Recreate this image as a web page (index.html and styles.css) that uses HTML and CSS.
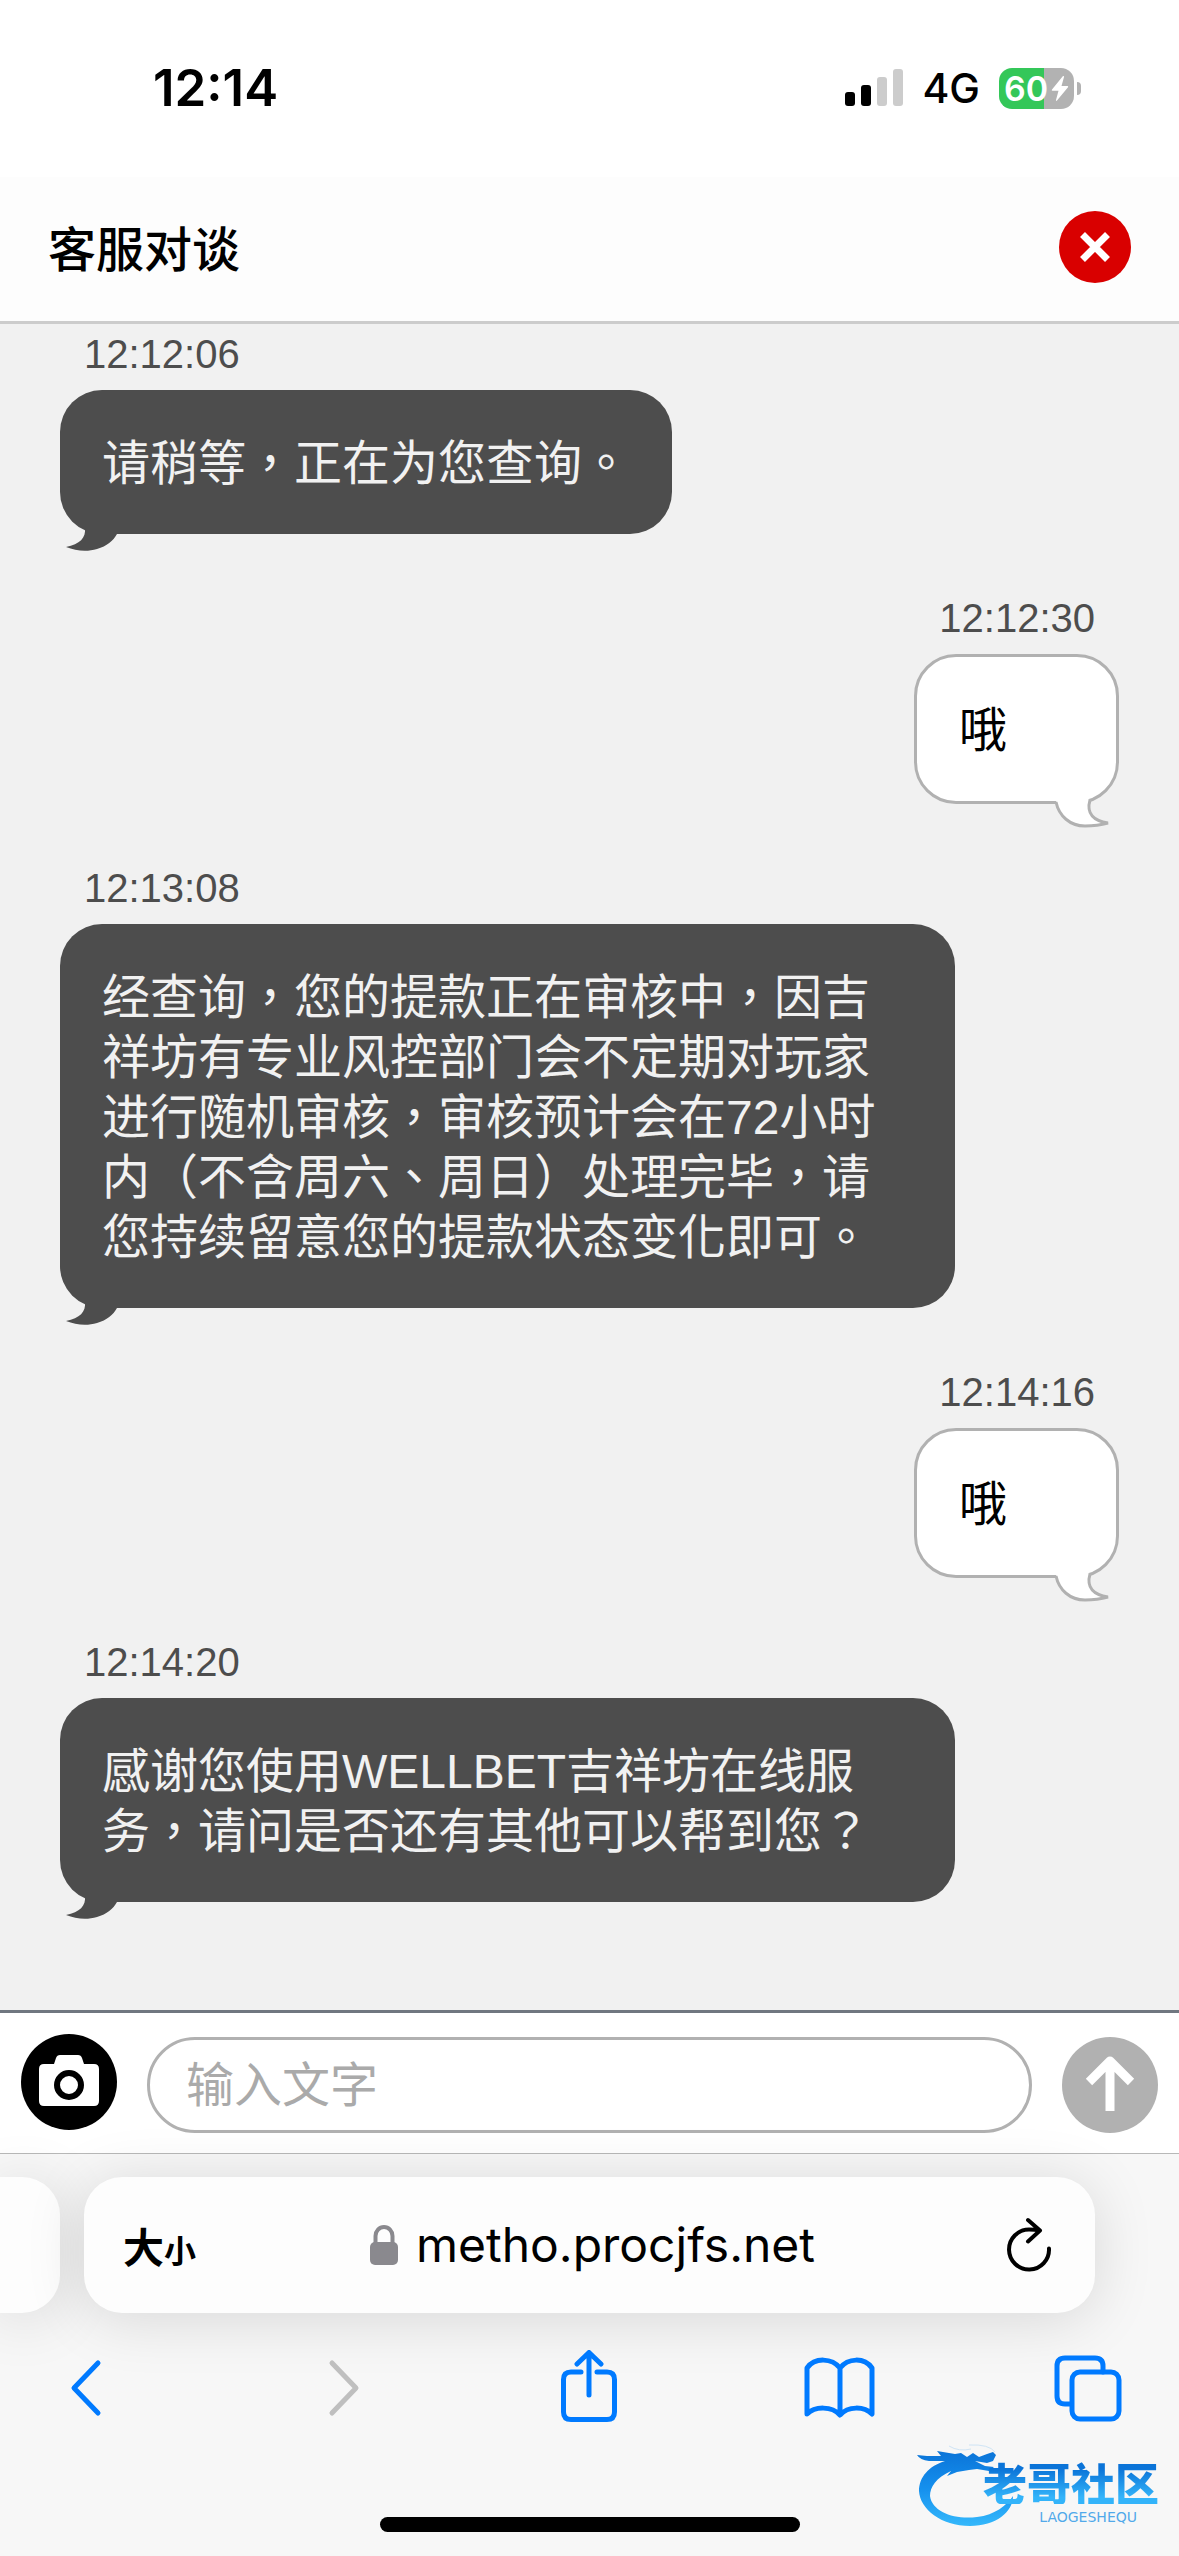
FILE: index.html
```html
<!DOCTYPE html>
<html lang="zh-Hans">
<head>
<meta charset="utf-8">
<meta name="viewport" content="width=device-width, initial-scale=1">
<title>客服对谈</title>
<link rel="stylesheet" href="styles.css">
</head>
<body>
<div class="status-bar">
  <span class="clock">12:14</span>
  <div class="indicators">
    <svg class="signal" width="58" height="38" viewBox="0 0 58 38" aria-hidden="true">
      <rect x="0" y="23" width="10" height="14" rx="3"/>
      <rect x="16" y="16" width="10" height="21" rx="3"/>
      <rect class="off" x="32" y="8" width="10" height="29" rx="3"/>
      <rect class="off" x="48" y="0" width="10" height="37" rx="3"/>
    </svg>
    <span class="network">4G</span>
    <div class="battery">
      <div class="battery-body">
        <span>60</span>
        <svg width="18" height="27" viewBox="0 0 18 27" aria-hidden="true"><path d="M12 1 1 14.5q-.8 1.200.6 1.200H7.500L5 25q-.2 1.400 1 .6L17 12.200q.6-1.200-.6-1.200H10.500L13 2q.2-1.400-1-1z"/></svg>
      </div>
      <div class="battery-cap"></div>
    </div>
  </div>
</div>

<header class="chat-header">
  <h1>客服对谈</h1>
  <button class="close" type="button" aria-label="关闭">
    <svg width="72" height="72" viewBox="0 0 72 72" aria-hidden="true"><path d="M23.500 23.500l25 25M48.500 23.500l-25 25"/></svg>
  </button>
</header>

<main class="chat" lang="zh-Hant">
  <ol class="messages">
    <li class="message agent">
      <time>12:12:06</time>
      <p class="bubble">请稍等，正在为您查询。<svg class="tail" width="52" height="24" viewBox="0 0 52 24" aria-hidden="true"><path d="M19 0C20 10 14 16 0 19C10 23 21 24 31 21C41 18 47 13 51 6V0Z"/></svg></p>
    </li>
    <li class="message visitor">
      <time>12:12:30</time>
      <p class="bubble">哦<svg class="tail" width="64" height="42" viewBox="0 0 64 42" aria-hidden="true"><path class="cover" d="M6 9H38L41 11V18H7Z"/><path class="outline" d="M6 12C9 26 20 36 35 36C44 36 51 35 58 33C44 31 36 24 40 10"/></svg></p>
    </li>
    <li class="message agent">
      <time>12:13:08</time>
      <p class="bubble">经查询，您的提款正在审核中，因吉祥坊有专业风控部门会不定期对玩家进行随机审核，审核预计会在72小时内（不含周六、周日）处理完毕，请您持续留意您的提款状态变化即可。<svg class="tail" width="52" height="24" viewBox="0 0 52 24" aria-hidden="true"><path d="M19 0C20 10 14 16 0 19C10 23 21 24 31 21C41 18 47 13 51 6V0Z"/></svg></p>
    </li>
    <li class="message visitor">
      <time>12:14:16</time>
      <p class="bubble">哦<svg class="tail" width="64" height="42" viewBox="0 0 64 42" aria-hidden="true"><path class="cover" d="M6 9H38L41 11V18H7Z"/><path class="outline" d="M6 12C9 26 20 36 35 36C44 36 51 35 58 33C44 31 36 24 40 10"/></svg></p>
    </li>
    <li class="message agent">
      <time>12:14:20</time>
      <p class="bubble">感谢您使用WELLBET吉祥坊在线服务，请问是否还有其他可以帮到您？<svg class="tail" width="52" height="24" viewBox="0 0 52 24" aria-hidden="true"><path d="M19 0C20 10 14 16 0 19C10 23 21 24 31 21C41 18 47 13 51 6V0Z"/></svg></p>
    </li>
  </ol>
</main>

<form class="composer">
  <button class="round camera" type="button" aria-label="发送图片">
    <svg width="96" height="96" viewBox="0 0 96 96" aria-hidden="true">
      <path fill="#fff" d="M23 30H33L35 24Q36 21 39 21H57Q60 21 61 24L63 30H73Q78 30 78 35V67Q78 72 73 72H23Q18 72 18 67V35Q18 30 23 30Z"/>
      <circle cx="48" cy="51" r="12" fill="#fff" stroke="#000" stroke-width="6"/>
    </svg>
  </button>
  <input class="entry" type="text" placeholder="输入文字" aria-label="输入文字">
  <button class="round send" type="button" aria-label="发送">
    <svg width="96" height="96" viewBox="0 0 96 96" aria-hidden="true"><path fill="none" stroke="#fff" stroke-width="9" stroke-linejoin="round" d="M27 45 48 24 69 45M48 26V74"/></svg>
  </button>
</form>

<footer class="browser">
  <div class="tabs">
    <div class="previous-tab"></div>
    <div class="address">
      <button class="text-size" type="button"><span class="big">大</span><span class="small">小</span></button>
      <a class="site" href="#">
        <svg width="28" height="40" viewBox="0 0 28 40" aria-hidden="true"><rect x="0" y="17" width="28" height="23" rx="5" fill="#8a898e"/><path d="M5.500 19V11a8.500 9 0 0 1 17 0V19" fill="none" stroke="#8a898e" stroke-width="4"/></svg>
        <span>metho.procjfs.net</span>
      </a>
      <button class="reload" type="button" aria-label="重新加载">
        <svg width="46" height="56" viewBox="0 0 46 56" aria-hidden="true"><path d="M43 31.500A20 20 0 1 1 23 12.500Q29 12.500 33.500 13.500M22 3 34 13.500 22 24.500"/></svg>
      </button>
    </div>
  </div>
  <nav class="toolbar">
    <button type="button" aria-label="后退"><svg width="72" height="76" viewBox="0 0 72 76"><path d="M47 13 23 38 47 63"/></svg></button>
    <button type="button" aria-label="前进" disabled><svg width="72" height="76" viewBox="0 0 72 76"><path d="M30 13 54 38 30 63"/></svg></button>
    <button type="button" aria-label="分享"><svg width="72" height="76" viewBox="-8 0 72 76"><path d="M21 22H11Q3.500 22 3.500 29.500V62Q3.500 69.500 11 69.500H47Q54.500 69.500 54.500 62V29.500Q54.500 22 47 22H37M29 45V3M17 14 29 2.500 41 14"/></svg></button>
    <button type="button" aria-label="书签"><svg width="72" height="76" viewBox="0 0 72 76"><path d="M37 18C29 8 12 7 4 18V64C12 56 29 56 37 65C45 56 61 56 69 64V18C61 7 45 8 37 18ZM37 18V64"/></svg></button>
    <button type="button" aria-label="标签页"><svg width="72" height="76" viewBox="0 0 72 76"><path d="M18 54H12Q4 54 4 46V16Q4 8 12 8H42Q50 8 50 16V22"/><rect x="19" y="22" width="47" height="47" rx="8"/></svg></button>
  </nav>
  <div class="home-indicator"></div>
  <div class="watermark">
    <svg class="dragon" width="100" height="84" viewBox="0 0 100 84" aria-hidden="true">
      <defs><linearGradient id="sea" x1="0" y1="0" x2="0" y2="1"><stop offset="0" stop-color="#0b74d8"/><stop offset=".5" stop-color="#1590ee"/><stop offset="1" stop-color="#35b8fb"/></linearGradient></defs>
      <path fill="url(#sea)" d="M0 11 10 12 24 12 20 7 38 10 44 9 50 13 56 9 62 13 70 10 76 8 79 11 76 17 70 19 58 17 68 22 77 23 72 27 60 25 52 26 40 28 30 32 34 27C19 34 13 43 13 52C15 68 38 76 60 73C78 71 90 61 96 52C96 68 79 82 53 82C24 82 3 65 2 47C2 33 12 22 28 17L12 17Q3 16 0 11Z"/>
      <path fill="none" stroke="#cfe4f5" stroke-width="1" d="M32 2Q42 8 54 5M52 1Q72 0 78 8"/>
    </svg>
    <div class="wordmark">
      <span class="brand">老哥社区</span>
      <span class="brand-latin">LAOGESHEQU</span>
    </div>
  </div>
</footer>
</body>
</html>
```
FILE: styles.css
```css
* { box-sizing: border-box; }

body {
  margin: 0;
  min-height: 100vh;
  display: flex;
  flex-direction: column;
  background: #f1f1f1;
  color: #000;
  font-family: "Liberation Sans", "Noto Sans CJK TC", sans-serif;
}

button {
  padding: 0;
  border: 0;
  background: none;
  color: inherit;
  font: inherit;
}

svg { display: block; flex: none; }

.status-bar {
  display: flex;
  align-items: center;
  justify-content: space-between;
  padding: 56px 98px 57px 153px;
  background: #fff;
  font-family: Inter, sans-serif;
}

.clock { font-size: 51px; font-weight: 600; line-height: 64px; }

.indicators { display: flex; align-items: center; gap: 19px; }
.signal .off { fill: #ccc; }
.network { font-size: 41px; font-weight: 500; line-height: 48px; }

.battery { display: flex; align-items: center; gap: 3px; }

.battery-body {
  display: flex;
  align-items: center;
  justify-content: center;
  gap: 3px;
  width: 75px;
  height: 41px;
  border-radius: 13px;
  background: linear-gradient(90deg, #34c759 60%, #b2b2b2 60%);
  color: #fff;
  font-size: 34px;
  font-weight: 600;
}

.battery-body svg { fill: #fff; }

.battery-cap {
  width: 4px;
  height: 13px;
  border-radius: 0 4px 4px 0;
  background: #b2b2b2;
}

.chat-header {
  display: flex;
  align-items: center;
  justify-content: space-between;
  padding: 34px 48px 38px;
  border-bottom: 3px solid #ccc;
  background: #fdfdfd;
}

.chat-header h1 {
  margin: 0;
  padding-top: 8px;
  font-size: 48px;
  font-weight: 500;
  line-height: 64px;
}

.close {
  width: 72px;
  height: 72px;
  border-radius: 50%;
  background: #d90000;
}

.close path { stroke: #fff; stroke-width: 7; }

.chat { flex: 1; padding: 6px 60px 108px; }

.messages {
  display: flex;
  flex-direction: column;
  gap: 60px;
  margin: 0;
  padding: 0;
  list-style: none;
}

.message {
  display: flex;
  flex-direction: column;
  align-items: flex-start;
  gap: 12px;
}

.message.visitor { align-items: flex-end; }

.message time {
  padding: 0 24px;
  color: #4d4d4d;
  font-size: 40px;
  line-height: 48px;
}

.bubble {
  position: relative;
  max-width: 895px;
  margin: 0;
  padding: 44px 42px 40px;
  border-radius: 42px;
  font-size: 48px;
  line-height: 60px;
}

.agent .bubble { background: #4d4d4d; color: #f1f1f1; }

.visitor .bubble {
  min-width: 205px;
  border: 3px solid #b1b1b1;
  background: #fff;
}

.tail { position: absolute; }
.agent .tail { left: 6px; bottom: -18px; fill: #4d4d4d; }
.visitor .tail { right: 2px; bottom: -31px; }
.tail .cover { fill: #fff; }
.tail .outline { fill: #fff; stroke: #b1b1b1; stroke-width: 3; }

.composer {
  display: flex;
  align-items: flex-end;
  gap: 30px;
  padding: 21px 21px 20px;
  border-top: 3px solid #707780;
  background: #fff;
}

.round { flex: none; width: 96px; height: 96px; border-radius: 50%; }
.camera { margin-bottom: 3px; background: #000; }
.send { background: #b1b1b1; }

.entry {
  flex: 1;
  min-width: 0;
  height: 96px;
  padding: 0 36px;
  border: 3px solid #b1b1b1;
  border-radius: 48px;
  background: #fff;
  font-family: inherit;
  font-size: 48px;
}

.entry::placeholder { color: #aaa; opacity: 1; }

.browser {
  position: relative;
  padding: 23px 0 24px;
  border-top: 1px solid #b8b8b8;
  background: #f7f7f7;
}

.tabs { display: flex; gap: 24px; padding-right: 84px; }

.previous-tab,
.address {
  height: 136px;
  background: #fdfdfd;
  box-shadow: 0 6px 60px rgba(0, 0, 0, 0.13);
}

.previous-tab { width: 60px; border-radius: 0 38px 38px 0; }

.address {
  flex: 1;
  display: grid;
  grid-template-columns: 1fr auto 1fr;
  align-items: center;
  padding: 0 33px 0 39px;
  border-radius: 38px;
}

.text-size {
  justify-self: start;
  display: flex;
  align-items: baseline;
  font-family: "Noto Sans CJK SC", sans-serif;
  font-weight: 700;
}

.big { font-size: 41px; }
.small { font-size: 32px; }

.site {
  display: flex;
  align-items: center;
  gap: 18px;
  color: #000;
  font-family: Inter, sans-serif;
  font-size: 48px;
  line-height: 60px;
  text-decoration: none;
}

.reload { justify-self: end; padding: 0 10px; }

.reload path {
  fill: none;
  stroke: #000;
  stroke-width: 4;
  stroke-linecap: round;
  stroke-linejoin: round;
}

.toolbar {
  display: flex;
  justify-content: space-between;
  padding: 37px 54px 0 51px;
}

.toolbar path,
.toolbar rect {
  fill: none;
  stroke: #007aff;
  stroke-width: 5;
  stroke-linecap: round;
  stroke-linejoin: round;
}

.toolbar :disabled path { stroke: #bfbfbf; }

.home-indicator {
  width: 420px;
  height: 15px;
  margin: 91px auto 0;
  border-radius: 8px;
  background: #000;
}

.watermark {
  position: absolute;
  right: 16px;
  bottom: 28px;
  width: 246px;
  height: 84px;
}

.dragon { position: absolute; left: 0; top: 0; }

.wordmark {
  position: absolute;
  right: 4px;
  bottom: 4px;
  display: flex;
  flex-direction: column;
  align-items: flex-end;
  gap: 6px;
}

.brand {
  background: linear-gradient(#0b74d8 20%, #33b4fa 85%);
  background-clip: text;
  color: transparent;
  font-family: "Noto Sans CJK SC", sans-serif;
  font-size: 44px;
  font-weight: 900;
  line-height: 44px;
}

.brand-latin {
  padding-right: 22px;
  color: #52a9ea;
  font-family: "DejaVu Sans", sans-serif;
  font-size: 14px;
  line-height: 14px;
}
```
